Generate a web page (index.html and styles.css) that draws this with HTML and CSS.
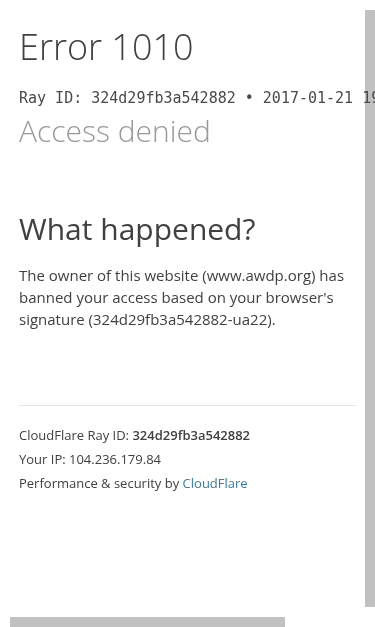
FILE: index.html
```html
<!DOCTYPE html>
<html lang="en">
<head>
    <meta charset="UTF-8">
    <meta name="viewport" content="width=device-width, initial-scale=1.0">
    <title>Access denied | www.awdp.org used CloudFlare to restrict access</title>
    <link rel="stylesheet" href="styles.css">
</head>
<body>

    <!-- Error header -->
    <div class="cf-wrapper">
        <div class="cf-error-overview">
            <h1 class="cf-title">Error 1010</h1>
            <span class="cf-ray">Ray ID: 324d29fb3a542882 &bull; 2017-01-21 19:42:08 UTC</span>
            <h2 class="cf-subheadline">Access denied</h2>
        </div>

        <!-- What happened -->
        <section class="cf-section">
            <h2 class="cf-section-title">What happened?</h2>
            <p class="cf-text">The owner of this website (www.awdp.org) has banned your access based on your browser's signature (324d29fb3a542882-ua22).</p>
        </section>

        <!-- Footer -->
        <div class="cf-footer">
            <p class="cf-footer-item">CloudFlare Ray ID: <strong>324d29fb3a542882</strong></p>
            <p class="cf-footer-item">Your IP: 104.236.179.84</p>
            <p class="cf-footer-item">Performance &amp; security by <a href="#" class="cf-link">CloudFlare</a></p>
        </div>
    </div>

    <!-- Scrollbar thumbs -->
    <div class="thumb thumb-y"></div>
    <div class="thumb thumb-x"></div>

</body>
</html>
```

FILE: styles.css
```css
html {
    background: #fff;
}

html, body {
    margin: 0;
    padding: 0;
    overflow: hidden;
}

body {
    font-family: "Open Sans", "Liberation Sans", sans-serif;
    color: #404040;
}

/* Wrapper */
.cf-wrapper {
    padding: 25px 19px 0;
}

/* Header */
.cf-title {
    margin: 0;
    font-size: 36px;
    line-height: 44px;
    font-weight: 300;
    color: #404040;
}

.cf-ray {
    display: block;
    margin-top: 18px;
    font-family: "DejaVu Sans Mono", monospace;
    font-size: 15px;
    line-height: 22px;
    white-space: nowrap;
    color: #4a4a4a;
}

.cf-subheadline {
    margin: 4px 0 0;
    font-size: 30px;
    line-height: 36px;
    font-weight: 300;
    color: #999;
}

/* Section */
.cf-section {
    margin-top: 62px;
}

.cf-section-title {
    margin: 0;
    font-size: 30px;
    line-height: 36px;
    font-weight: 400;
}

.cf-text {
    margin: 17px 0 0;
    font-size: 15px;
    line-height: 22px;
}

/* Footer */
.cf-footer {
    margin-top: 75px;
    padding-top: 17px;
    border-top: 1px solid #e6e6e6;
}

.cf-footer-item {
    margin: 0;
    font-size: 13px;
    line-height: 24px;
}

.cf-footer-item strong {
    font-weight: 600;
}

.cf-link {
    color: #2f7bbf;
    text-decoration: none;
}

/* Scrollbar thumbs, painted under the text */
.thumb {
    position: fixed;
    z-index: -1;
    background: #c1c1c1;
}

.thumb-y {
    top: 10px;
    right: 0;
    width: 10px;
    height: 597px;
}

.thumb-x {
    left: 10px;
    top: 617px;
    width: 275px;
    height: 10px;
}
```
